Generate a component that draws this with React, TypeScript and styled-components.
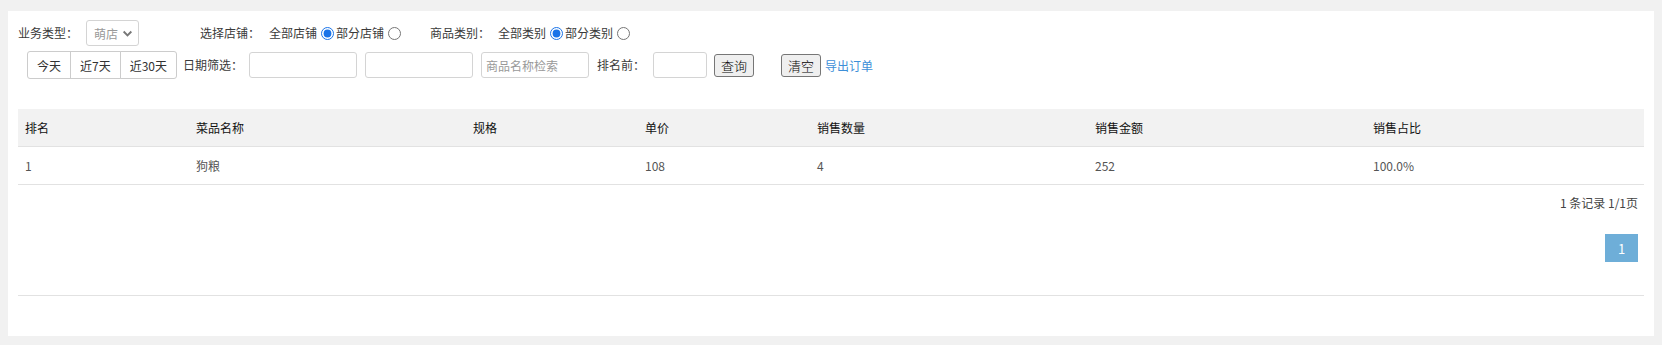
import React from 'react';
import styled, { createGlobalStyle } from 'styled-components';

const GlobalStyle = createGlobalStyle`
  body {
    margin: 0;
    padding: 11px 8px 9px 8px;
    background: #f1f1f1;
    font-family: "Microsoft YaHei", "Noto Sans CJK SC", sans-serif;
    font-size: 12px;
    color: #3a3a3a;
  }
`;

const Panel = styled.div`
  background: #fff;
  padding: 9px 10px 40px 10px;
`;

const FilterRow = styled.div<{ $top?: number }>`
  display: flex;
  align-items: center;
  margin-top: ${p => p.$top || 0}px;
`;

const Label = styled.span<{ $left?: number }>`
  margin-left: ${p => p.$left || 0}px;
  line-height: 16px;
  white-space: nowrap;
`;

const FakeSelect = styled.div`
  display: flex;
  align-items: center;
  justify-content: space-between;
  box-sizing: border-box;
  width: 53px;
  height: 26px;
  margin-left: 8px;
  padding: 0 5px 0 7px;
  border: 1px solid #d4d4d4;
  border-radius: 3px;
  color: #999;
`;

const Radio = styled.input.attrs({ type: 'radio' })`
  width: 13px;
  height: 13px;
  margin: 0 2px 0 4px;
  accent-color: #1a73e8;
`;

const BtnGroup = styled.div`
  display: flex;
  margin-left: 9px;
`;

const GroupBtn = styled.button`
  height: 28px;
  padding: 0 9px;
  background: #fff;
  border: 1px solid #ccc;
  margin-left: -1px;
  font: inherit;
  color: #333;
  &:first-child {
    margin-left: 0;
    border-radius: 3px 0 0 3px;
  }
  &:last-child {
    border-radius: 0 3px 3px 0;
  }
`;

const TextInput = styled.input<{ $w?: number; $left?: number }>`
  box-sizing: border-box;
  width: ${p => p.$w || 108}px;
  height: 26px;
  margin-left: ${p => p.$left ?? 8}px;
  padding: 0 4px;
  border: 1px solid #d4d4d4;
  border-radius: 3px;
  font: inherit;
  color: #333;
  outline: none;
  &::placeholder {
    color: #999;
  }
`;

const PlainBtn = styled.button<{ $left?: number }>`
  height: 23px;
  margin-left: ${p => p.$left || 0}px;
  padding: 0 6px;
  background: #efefef;
  border: 1px solid #767676;
  border-radius: 3px;
  font-family: inherit;
  font-size: 13px;
  font-weight: 300;
  color: #000;
`;

const LinkText = styled.a`
  margin-left: 4px;
  color: #3d8fd8;
  text-decoration: none;
  font-size: 12px;
`;

const Table = styled.table`
  width: 100%;
  margin-top: 30px;
  border-collapse: collapse;
  table-layout: fixed;
`;

const Th = styled.th`
  height: 37px;
  padding: 0 7px;
  background: #f2f2f2;
  border-bottom: 1px solid #e2e2e2;
  text-align: left;
  font-weight: normal;
  color: #111;
`;

const Td = styled.td`
  height: 37px;
  padding: 0 7px;
  border-bottom: 1px solid #e2e2e2;
  color: #555;
`;

const Footer = styled.div`
  display: flex;
  flex-direction: column;
  align-items: flex-end;
  padding: 10px 6px 0 0;
  border-bottom: 1px solid #e2e2e2;
`;

const Summary = styled.div`
  line-height: 16px;
  color: #444;
`;

const PageBtn = styled.div`
  display: flex;
  align-items: center;
  justify-content: center;
  width: 33px;
  height: 28px;
  margin: 23px 0 33px;
  background: #6eaed8;
  color: #fff;
  font-size: 13px;
`;

const columns = [
  { title: '排名', w: 171 },
  { title: '菜品名称', w: 277 },
  { title: '规格', w: 172 },
  { title: '单价', w: 172 },
  { title: '销售数量', w: 278 },
  { title: '销售金额', w: 278 },
  { title: '销售占比', w: 278 },
];

const rows = [['1', '狗粮', '', '108', '4', '252', '100.0%']];

const Chevron = () => (
  <svg width="11" height="11" viewBox="0 0 10 10">
    <path d="M1.5 3.2 L5 6.7 L8.5 3.2" fill="none" stroke="#777" strokeWidth="1.7" />
  </svg>
);

const App: React.FC = () => (
  <>
    <GlobalStyle />
    <Panel>
      <FilterRow>
        <Label>业务类型：</Label>
        <FakeSelect>
          <span>萌店</span>
          <Chevron />
        </FakeSelect>
        <Label $left={61}>选择店铺：</Label>
        <Label $left={9}>全部店铺</Label>
        <Radio name="shop" defaultChecked />
        <Label>部分店铺</Label>
        <Radio name="shop" />
        <Label $left={27}>商品类别：</Label>
        <Label $left={8}>全部类别</Label>
        <Radio name="cat" defaultChecked />
        <Label>部分类别</Label>
        <Radio name="cat" />
      </FilterRow>
      <FilterRow $top={5}>
        <BtnGroup>
          <GroupBtn>今天</GroupBtn>
          <GroupBtn>近7天</GroupBtn>
          <GroupBtn>近30天</GroupBtn>
        </BtnGroup>
        <Label $left={6}>日期筛选：</Label>
        <TextInput $left={6} />
        <TextInput />
        <TextInput placeholder="商品名称检索" />
        <Label $left={8}>排名前：</Label>
        <TextInput $w={54} />
        <PlainBtn $left={7}>查询</PlainBtn>
        <PlainBtn $left={27}>清空</PlainBtn>
        <LinkText href="#">导出订单</LinkText>
      </FilterRow>
      <Table>
        <colgroup>
          {columns.map(c => (
            <col key={c.title} style={{ width: c.w }} />
          ))}
        </colgroup>
        <thead>
          <tr>
            {columns.map(c => (
              <Th key={c.title}>{c.title}</Th>
            ))}
          </tr>
        </thead>
        <tbody>
          {rows.map((r, i) => (
            <tr key={i}>
              {r.map((v, j) => (
                <Td key={j}>{v}</Td>
              ))}
            </tr>
          ))}
        </tbody>
      </Table>
      <Footer>
        <Summary>1 条记录 1/1页</Summary>
        <PageBtn>1</PageBtn>
      </Footer>
    </Panel>
  </>
);

export default App;
